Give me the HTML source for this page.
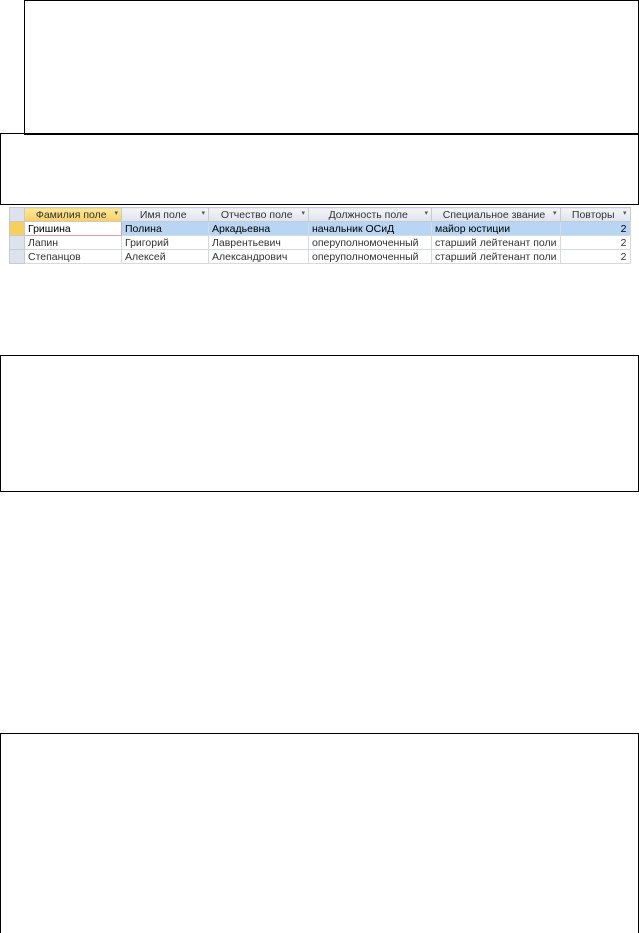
<!DOCTYPE html><html><head><meta charset="utf-8"><style>
html,body{margin:0;width:639px;height:933px;overflow:hidden}
body{background:#fff;position:relative;font-family:"Liberation Sans",sans-serif}
.b{position:absolute;border:1px solid #000;box-sizing:border-box}
table{position:absolute;left:9px;top:207px;border-collapse:collapse;font-size:10.5px;color:#333;table-layout:fixed}
td{height:13px;padding:0 3px;border:1px solid #d5d9e0;white-space:nowrap;overflow:hidden}
th{height:13px;font-weight:normal;background:linear-gradient(#f3f5f8,#dfe4ec);border:1px solid #c5cad3;color:#333;padding:0 3px;white-space:nowrap;overflow:hidden}
th span{float:right;font-size:7px;color:#555}
.rh{background:#dde3ec;border-color:#c5cad3}
.sel td{background:#b8d5f3;color:#000}
</style></head><body>
<div class="b" style="left:24px;top:0;width:615px;height:135px"></div>
<div class="b" style="left:0;top:133px;width:639px;height:72px"></div>
<table>
<colgroup><col style="width:15px"><col style="width:97px"><col style="width:87px"><col style="width:100px"><col style="width:123px"><col style="width:125px"><col style="width:70px"></colgroup>
<tr><th class="rh" style="background:#dde3ec"></th><th style="background:linear-gradient(#fde9a0,#f7cf5e)">Фамилия поле<span>▾</span></th><th>Имя поле<span>▾</span></th><th>Отчество поле<span>▾</span></th><th>Должность поле<span>▾</span></th><th>Специальное звание<span>▾</span></th><th>Повторы<span>▾</span></th></tr>
<tr class="sel"><td class="rh" style="background:#f7cf5e"></td><td style="background:#fff;border:1px solid #e8a0a0">Гришина</td><td>Полина</td><td>Аркадьевна</td><td>начальник ОСиД</td><td>майор юстиции</td><td style="text-align:right">2</td></tr>
<tr><td class="rh"></td><td>Лапин</td><td>Григорий</td><td>Лаврентьевич</td><td>оперуполномоченный</td><td>старший лейтенант поли</td><td style="text-align:right">2</td></tr>
<tr><td class="rh"></td><td>Степанцов</td><td>Алексей</td><td>Александрович</td><td>оперуполномоченный</td><td>старший лейтенант поли</td><td style="text-align:right">2</td></tr>
</table>
<div class="b" style="left:0;top:355px;width:639px;height:137px"></div>
<div class="b" style="left:0;top:733px;width:639px;height:220px"></div>
</body></html>
